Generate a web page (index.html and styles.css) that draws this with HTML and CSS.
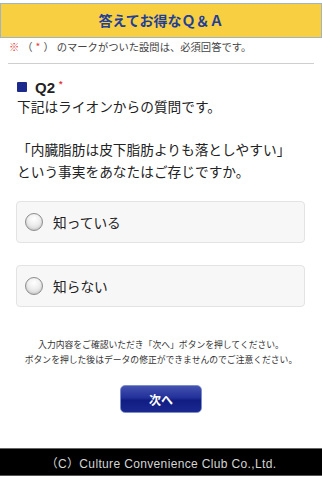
FILE: index.html
```html
<!DOCTYPE html>
<html lang="ja">
<head>
<meta charset="utf-8">
<link rel="stylesheet" href="styles.css">
</head>
<body>
<div class="page">
  <header class="title-bar"><h1 class="title">答えてお得なＱ＆Ａ</h1></header>
  <p class="notice"><span class="prefix"><span class="red">※</span>（<span class="red">*</span>）</span>のマークがついた設問は、必須回答です。</p>
  <div class="rule"></div>
  <section class="question">
    <h2 class="q-head"><span class="q-mark"></span><span class="q-num">Q2</span><span class="q-req">*</span></h2>
    <p class="q-text">下記はライオンからの質問です。<br><br>「内臓脂肪は皮下脂肪よりも落としやすい」<br>という事実をあなたはご存じですか。</p>
  </section>
  <div class="options">
    <label class="option"><span class="radio"></span><span class="opt-text">知っている</span></label>
    <label class="option"><span class="radio"></span><span class="opt-text">知らない</span></label>
  </div>
  <p class="note">入力内容をご確認いただき「次へ」ボタンを押してください。<br>ボタンを押した後はデータの修正ができませんのでご注意ください。</p>
  <div class="btn-row"><button class="next-btn">次へ</button></div>
  <footer class="footer">（C）Culture Convenience Club Co.,Ltd.</footer>
</div>
</body>
</html>
```
FILE: styles.css
```css
* { box-sizing: border-box; }
html, body { margin: 0; padding: 0; background: #fff; }
body {
  font-family: "Liberation Sans", "Noto Sans CJK JP", sans-serif;
  color: #333;
  width: 322px;
  height: 480px;
  overflow: hidden;
}
.page { padding-top: 3px; }
.title-bar {
  height: 35px;
  background: #f8cf40;
  border: 1px solid #9fb4c4;
  display: flex;
  align-items: center;
  justify-content: center;
}
.title {
  margin: 0;
  font-size: 14px;
  font-weight: bold;
  color: #1f3f99;
  line-height: 1;
}
.notice {
  margin: 0;
  padding: 2px 9px 0;
  font-family: "Noto Sans CJK JP", sans-serif;
  font-size: 10.3px;
  line-height: 14px;
  color: #444;
}
.prefix { letter-spacing: 3px; }
.red { color: #e23a3a; }
.rule {
  margin: 9px 8px 0 8px;
  border-top: 1px solid #cfcfcf;
}
.question { padding: 13px 17px 0; }
.q-head {
  margin: 0;
  display: flex;
  align-items: center;
  height: 20px;
  font-size: 15px;
  font-weight: bold;
  color: #222;
}
.q-mark {
  width: 10px;
  height: 10px;
  background: #1c2a8e;
  border-radius: 1px;
  margin-right: 8px;
}
.q-num { line-height: 1; }
.q-req {
  color: #e23a3a;
  font-size: 9px;
  align-self: flex-start;
  margin-left: 4px;
  margin-top: 2px;
}
.q-text {
  margin: 0;
  font-size: 13.7px;
  line-height: 21.5px;
  color: #222;
}
.options {
  display: flex;
  flex-direction: column;
  gap: 22px;
  margin: 18px 17px 0 16px;
}
.option {
  height: 42px;
  background: #f7f7f7;
  border: 1px solid #e3e3e3;
  border-radius: 4px;
  display: flex;
  align-items: center;
  padding-left: 8px;
}
.radio {
  width: 18px;
  height: 18px;
  border-radius: 50%;
  border: 1px solid #8c8c8c;
  background: radial-gradient(circle at 50% 30%, #ffffff 0%, #f0f0f0 40%, #cfcfcf 100%);
  box-shadow: inset 0 -1px 2px rgba(0,0,0,0.1);
  margin-right: 10px;
}
.opt-text {
  font-size: 13.7px;
  color: #222;
}
.note {
  margin: 31px 0 0;
  text-align: center;
  font-size: 8.8px;
  line-height: 15px;
  color: #333;
}
.btn-row {
  display: flex;
  justify-content: center;
  margin-top: 17px;
}
.next-btn {
  width: 82px;
  height: 28px;
  border: 1px solid #7d8fc9;
  border-radius: 5px;
  background: linear-gradient(#4452b0 0%, #22309a 45%, #111d82 55%, #1a2890 100%);
  color: #fff;
  font-family: "Liberation Sans", "Noto Sans CJK JP", sans-serif;
  font-size: 12px;
  font-weight: bold;
  padding: 0;
}
.footer {
  margin-top: 35px;
  height: 28px;
  background: #000;
  border-top: 1px solid #666;
  border-bottom: 1px solid #555;
  color: #d4d4d4;
  font-size: 12px;
  letter-spacing: 0.35px;
  display: flex;
  align-items: center;
  justify-content: center;
}
```
